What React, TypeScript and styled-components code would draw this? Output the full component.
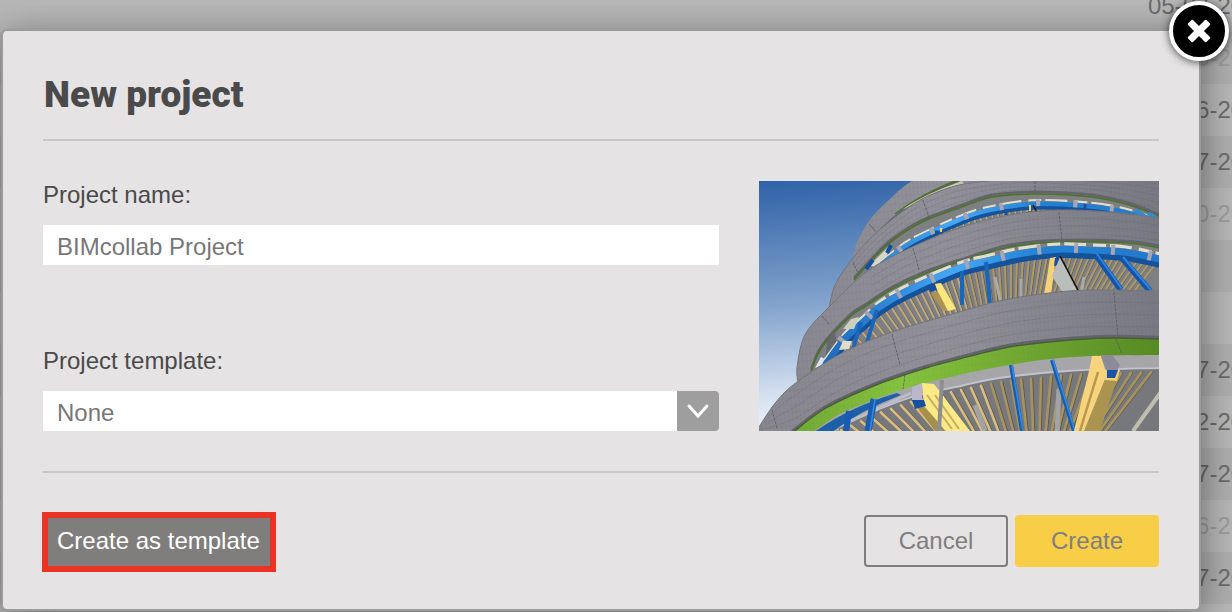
import React from "react";
import styled, { createGlobalStyle, css } from "styled-components";

const GlobalStyle = createGlobalStyle`
  *, *::before, *::after { box-sizing: border-box; }
  body {
    margin: 0;
    background: #b8b8b8;
    font-family: "Liberation Sans", Arial, sans-serif;
    font-size: 24px;
    line-height: 28px;
    color: #4a4a4a;
  }
  button, input, select { font: inherit; }
`;

/* ---------- page behind the dialog ---------- */

const Page = styled.div`
  position: relative;
  min-height: 100vh;
  overflow: hidden;
  padding: 31px 33px 3px 3px;
`;

const Backdrop = styled.div`
  position: absolute;
  inset: 0;
  overflow: hidden;
`;

const DateTable = styled.table`
  width: 100%;
  margin-top: -20px;
  table-layout: fixed;
  border-collapse: collapse;
`;

const DateRow = styled.tr<{ $muted?: boolean }>`
  height: 52px;
  background: #b8b8b8;
  color: ${(p) => (p.$muted ? "#9c9c9c" : "#6c6c6c")};
  &:nth-child(even) { background: #afafaf; }
`;

const NameCell = styled.td`
  padding: 0;
`;

const DateCell = styled.td`
  width: 84px;
  padding: 0;
  overflow: hidden;
  white-space: nowrap;
`;

/* ---------- dialog ---------- */

const Dialog = styled.section`
  position: relative;
  padding: 40px 40px 37px;
  border-radius: 4px;
  background: #e5e3e4;
  box-shadow: 0 0 0 2px #9b9b9b, 0 8px 40px rgba(0, 0, 0, 0.5);
`;

const CloseButton = styled.button`
  position: absolute;
  top: -30px;
  right: -30px;
  display: grid;
  place-items: center;
  width: 60px;
  height: 60px;
  padding: 0;
  border: 4px solid #fff;
  border-radius: 50%;
  background: #000;
  box-shadow: 0 1px 8px rgba(0, 0, 0, 0.7);
`;

const Header = styled.header`
  padding: 2px 0 22px 1px;
  border-bottom: 2px solid #c9c8c9;
`;

const Title = styled.h1`
  margin: 0;
  font-family: Roboto, sans-serif;
  font-size: 37px;
  font-weight: 900;
  line-height: 44px;
`;

const Body = styled.div`
  display: flex;
  gap: 40px;
  padding: 40px 0;
`;

const Fields = styled.div`
  display: flex;
  flex: 1;
  flex-direction: column;
  justify-content: space-between;
  min-width: 0;
`;

const Field = styled.div`
  display: grid;
  gap: 16px;
`;

const control = css`
  width: 100%;
  height: 40px;
  padding: 4px 14px 0;
  border: 0;
  border-radius: 0;
  outline: 0;
  background: #fff;
  color: #777;
`;

const TextInput = styled.input`
  ${control}
`;

const SelectWrap = styled.div`
  display: grid;
`;

const Select = styled.select`
  ${control}
  grid-area: 1 / 1;
  appearance: none;
  border-radius: 0 4px 4px 0;
`;

const SelectArrow = styled.span`
  grid-area: 1 / 1;
  justify-self: end;
  display: grid;
  place-items: center;
  width: 42px;
  border-radius: 0 4px 4px 0;
  background: #9e9e9e;
  pointer-events: none;
`;

const Picture = styled.svg`
  display: block;
  flex: none;
  width: 400px;
  height: 250px;
`;

const Footer = styled.footer`
  display: flex;
  align-items: flex-start;
  justify-content: space-between;
  padding-top: 39px;
  border-top: 2px solid #c9c8c9;
`;

const Actions = styled.div`
  display: flex;
  gap: 7px;
  padding-top: 3px;
`;

const TemplateButton = styled.button`
  height: 60px;
  margin-left: -1px;
  padding: 0 10px 2px 9px;
  border: 6px solid #ea3323;
  background: #7f7e7c;
  color: #fff;
`;

const ActionButton = styled.button<{ $primary?: boolean }>`
  width: 144px;
  height: 52px;
  padding: 0;
  border: 2px solid ${(p) => (p.$primary ? "#f7ce46" : "#7f7e7f")};
  border-radius: 4px;
  background: ${(p) => (p.$primary ? "#f7ce46" : "transparent")};
  color: #7f7e7f;
`;

/* ---------- project picture ---------- */

type Pt = [number, number];

/* Smooth curve through the points (Catmull-Rom turned into Béziers). */
const curve = (pts: Pt[]) => {
  let d = `M${pts[0][0]} ${pts[0][1]}`;
  for (let i = 0; i < pts.length - 1; i++) {
    const a = pts[Math.max(i - 1, 0)];
    const b = pts[i];
    const c = pts[i + 1];
    const e = pts[Math.min(i + 2, pts.length - 1)];
    d += `C${b[0] + (c[0] - a[0]) / 6} ${b[1] + (c[1] - a[1]) / 6} ${c[0] - (e[0] - b[0]) / 6} ${c[1] - (e[1] - b[1]) / 6} ${c[0]} ${c[1]}`;
  }
  return d;
};

const area = (pts: Pt[]) => `${curve(pts)}L402 252L${pts[0][0]} 252Z`;

const yAt = (pts: Pt[], x: number) => {
  for (let i = 0; i < pts.length - 1; i++) {
    const [x0, y0] = pts[i];
    const [x1, y1] = pts[i + 1];
    if (x >= x0 && x <= x1) return y0 + ((y1 - y0) * (x - x0)) / (x1 - x0);
  }
  return pts[pts.length - 1][1];
};

const ring1Outer: Pt[] = [[93, 82], [97, 64], [104, 50], [113, 36], [133, 16], [155, -1], [200, -20], [402, -20]];
const ring2Outer: Pt[] = [[70, 126], [77, 102], [95, 76], [117, 52], [143, 31], [167, 16], [200, 4], [240, -1], [273, -2], [343, 1], [402, 8]];
const ring2Inner: Pt[] = [[95, 99], [113, 79], [133, 60], [163, 41], [200, 27], [233, 16], [277, 13], [333, 16], [370, 24], [402, 36]];
const ring3Outer: Pt[] = [[39, 202], [38, 187], [43, 161], [52, 145], [72, 124], [90, 106], [113, 87], [153, 66], [200, 47], [250, 34], [300, 29], [350, 31], [402, 37]];
const ring3Inner: Pt[] = [[52, 191], [58, 175], [67, 161], [93, 134], [107, 125], [133, 108], [167, 92], [200, 81], [250, 66], [300, 61], [367, 62], [402, 67]];
const ring4Outer: Pt[] = [[-2, 249], [17, 221], [38, 201], [83, 172], [133, 151], [200, 131], [245, 119], [290, 112], [333, 109], [402, 110]];
const ring4Inner: Pt[] = [[33, 252], [67, 227], [117, 204], [167, 187], [200, 178], [250, 166], [300, 160], [350, 157], [402, 158]];
const greenInner: Pt[] = [[50, 254], [83, 232], [133, 212], [167, 202], [200, 194], [233, 187], [283, 179], [333, 175], [402, 174]];

const strip2: Pt[] = [[118, 86], [133, 74], [153, 60], [200, 38], [227, 29], [273, 22], [327, 24], [365, 30], [402, 42]];
const strip3: Pt[] = [[66, 183], [87, 155], [105, 139], [120, 125], [147, 109], [200, 86], [227, 79], [263, 71], [300, 67], [333, 68], [367, 70], [402, 77]];
const slatTop: Pt[] = [[80, 246], [123, 227], [160, 214], [202, 205], [240, 197], [308, 190], [402, 187]];

const mid = (a: Pt[], b: Pt[], f: number): Pt[] =>
  a.filter(([x]) => x > 90 || a === ring4Outer).map(([x, y]) => [x, y + (yAt(b, Math.max(x, b[0][0])) - y) * f] as Pt);

const Slats = ({ from, to, step, base, centre, lean, len, width, colour }: {
  from: number; to: number; step: number; base: Pt[]; centre: number; lean: number; len: number; width: number; colour: (x: number) => string;
}) => {
  const out: React.ReactNode[] = [];
  for (let x = from; x <= to; x += step) {
    const y = yAt(base, x);
    const dx = (centre - x) * lean * len;
    out.push(
      <g key={x} strokeLinecap="round">
        <path d={`M${x + width * 0.6} ${y}l${dx} ${len}`} stroke="#5d574a" strokeWidth={width * 0.5} />
        <path d={`M${x} ${y}l${dx} ${len}`} stroke={colour(x)} strokeWidth={width} />
      </g>,
    );
  }
  return <>{out}</>;
};

const BlueStrip = ({ pts, size }: { pts: Pt[]; size: number }) => {
  const shift = (n: number): Pt[] => pts.map(([x, y]) => [x, y + n]);
  return (
    <g fill="none">
      <path d={curve(shift(-size * 0.45))} stroke="#e0dfcd" strokeWidth={size * 0.35} strokeDasharray="22 7 13 4" />
      <path d={curve(shift(size * 0.75))} stroke="#15529c" strokeWidth={size * 0.75} />
      <path d={curve(shift(size * 0.15))} stroke="url(#beam)" strokeWidth={size * 0.75} />
      <path d={curve(shift(0))} stroke="#a6a5b3" strokeWidth={size * 1.1} strokeDasharray="4 33" strokeDashoffset="10" />
    </g>
  );
};

const Ring = ({ outer, inner }: { outer: Pt[]; inner: Pt[] }) => (
  <>
    <path d={area(outer)} fill="url(#ring)" />
    <path d={area(outer)} fill="url(#tiles)" />
    <g fill="none" stroke="#62626b" strokeWidth="0.5" opacity="0.55">
      {[0.25, 0.5, 0.75].map((f) => <path key={f} d={curve(mid(outer, inner, f))} strokeDasharray="9 1" />)}
    </g>
    <path d={curve(outer)} fill="none" stroke="#74747d" strokeWidth="1" />
    <path d={area(inner)} fill="#7e7f82" />
    <path d={curve(inner)} fill="none" stroke="#63646b" strokeWidth="2.4" transform="translate(0 -2)" />
    <path d={curve(inner)} fill="none" stroke="#4d722a" strokeWidth="1.6" />
  </>
);

const ProjectPicture = () => (
  <Picture viewBox="0 0 400 250" role="img" aria-label="Project picture">
    <defs>
      <linearGradient id="sky" x2="0.12" y2="1">
        <stop offset="0" stopColor="#2f62a8" />
        <stop offset="0.5" stopColor="#83a4cc" />
        <stop offset="0.85" stopColor="#d5e1f0" />
        <stop offset="1" stopColor="#eef3fa" />
      </linearGradient>
      <linearGradient id="ring" gradientUnits="userSpaceOnUse" x1="40" y1="0" x2="400" y2="0">
        <stop offset="0" stopColor="#8a8991" />
        <stop offset="0.4" stopColor="#93929b" />
        <stop offset="1" stopColor="#797983" />
      </linearGradient>
      <linearGradient id="green">
        <stop offset="0" stopColor="#72a935" />
        <stop offset="0.3" stopColor="#84c43c" />
        <stop offset="0.6" stopColor="#72aa31" />
        <stop offset="1" stopColor="#568b22" />
      </linearGradient>
      <linearGradient id="beam" gradientUnits="userSpaceOnUse" x1="60" y1="0" x2="400" y2="0">
        <stop offset="0" stopColor="#1c66b8" />
        <stop offset="0.4" stopColor="#45a8f5" />
        <stop offset="0.65" stopColor="#2381d3" />
        <stop offset="1" stopColor="#2478cc" />
      </linearGradient>
      <pattern id="tiles" width="4" height="7" patternUnits="userSpaceOnUse" patternTransform="rotate(-6)">
        <path d="M1 0V7M0 2H4" stroke="#5f5f69" strokeWidth="0.5" opacity="0.3" />
      </pattern>
    </defs>
    <rect width="400" height="250" fill="url(#sky)" />

    <path d={area(ring1Outer)} fill="url(#ring)" />
    <path d={area(ring1Outer)} fill="url(#tiles)" />
    <path d="M120 51Q152 18 200 -1" fill="none" stroke="#63646b" strokeWidth="3" />
    <path d="M140 30Q165 13 203 0L206 5Q170 14 147 27Z" fill="#c9c7a8" />
    <path d="M136 33Q163 12 200 -1" fill="none" stroke="#4d722a" strokeWidth="1.5" />
    <path d="M110 43L118 52" stroke="#595961" strokeWidth="0.8" />

    <Ring outer={ring2Outer} inner={ring2Inner} />
    <Slats from={130} to={398} step={6} base={strip2} centre={270} lean={0.005} len={22} width={1.6} colour={() => "#b6ab84"} />
    <BlueStrip pts={strip2} size={6} />
    <path d="M111 84L131 64L127 76L115 86Z" fill="#d7d7c6" />
    <path d="M107 88L114 79M128 72L132 64" stroke="#154fa4" strokeWidth="4" />
    <path d="M176 51h8M247 28v7M272 24v8M326 23v8" stroke="#1b4fa0" strokeWidth="3" />
    <path d="M182 51v-4M271 30v-6" stroke="#f3db5f" strokeWidth="2" />
    <path d="M274 24l5 9" stroke="#151515" strokeWidth="1.5" />
    <path d="M376 29l14 9M389 32l10 6" stroke="#328ada" strokeWidth="4" />

    <Ring outer={ring3Outer} inner={ring3Inner} />
    <path d="M56 187L62 176L66 178L64 184Z" fill="#dbe5f2" />
    <path d="M66 184L68 160L76 150L78 166Z" fill="#66686e" />
    <Slats from={84} to={400} step={6} base={strip3.map(([x, y]) => [x, y + 8])} centre={252} lean={0.0055} len={48} width={1.9} colour={(x) => (x < 200 ? "#c1aa78" : "#ae9a69")} />
    <path d="M236 96l6 26M262 98v22M325 96l-3 18" stroke="#a9aaab" strokeWidth="3" />
    <BlueStrip pts={strip3} size={9} />
    <path d="M80 169L84 160L93 160L90 168Z" fill="#dedecb" />
    <path d="M84 148L92 138L100 136L95 148Z" fill="#cfcfbd" />
    <g fill="none" stroke="#1c66ba" strokeWidth="4">
      <path d="M118 129L108 161M102 141L94 168M203 90V124M227 81L231 122" />
      <path d="M337 74L362 109M363 77L391 110" strokeWidth="6" stroke="#1455ac" />
      <path d="M338 73L363 108M364 76L392 109" strokeWidth="2" stroke="#2f83dd" />
    </g>
    <path d="M172 113L179 110L194 130L184 130Z" fill="#ad9455" />
    <path d="M175 103L182 102L197 128L189 130Z" fill="#fce67d" />
    <path d="M169 105L176 103L178 109L171 111Z" fill="#174f9f" />
    <path d="M291 77L297 76L292 114L285 115Z" fill="#f5d276" />
    <path d="M296 77L301 76L301 84L295 85Z" fill="#1b4f9e" />
    <path d="M301 76L318 110L304 112L293 95Z" fill="#b9beba" />
    <path d="M301 75L320 111" stroke="#111" strokeWidth="1.6" />

    <Ring outer={ring4Outer} inner={ring4Inner} />
    <path d={area(ring4Inner)} fill="url(#green)" />
    <path d={area(ring4Inner)} fill="url(#tiles)" opacity="0.5" />
    <path d={curve(ring4Inner)} fill="none" stroke="#4c5a40" strokeWidth="1.4" />
    <path d={area(greenInner)} fill="#a6a6a8" />
    <path d={area(slatTop)} fill="#77787b" />
    <path d={curve(slatTop)} fill="none" stroke="#c4c4cf" strokeWidth="1.8" />
    <path d="M54 252Q90 226 138 212L142 214Q100 230 72 252Z" fill="#1d5fa8" />
    <Slats from={82} to={396} step={10} base={slatTop.map(([x, y]) => [x, y + 4])} centre={278} lean={0.0068} len={80} width={2.6} colour={(x) => (x < 225 ? "#d8bd7e" : "#a6945f")} />
    <path d="M216 224L226 250M300 208L298 250" stroke="#a2a3a4" strokeWidth="5" />
    <path d="M374 250L402 211" fill="none" stroke="#c0beaf" strokeWidth="4" />
    <path d="M87 242L152 212" stroke="#bdbcca" strokeWidth="3" />
    <g fill="none" stroke="#155cb2">
      <path d="M90 230L87 250" strokeWidth="6" />
      <path d="M115 218L109 250" strokeWidth="7" />
      <path d="M252 184L263 250M293 179L315 250" strokeWidth="4" />
      <path d="M253 184L264 250M294 179L316 250M116 218L111 250" stroke="#348ae2" strokeWidth="1.6" />
    </g>
    <path d="M158 226L167 224L185 250H176Z" fill="#a88f4d" />
    <path d="M163 202L175 203L211 250H187L165 225Z" fill="#fbea86" />
    <path d="M168 214L193 248M176 214L200 248" stroke="#c9ad62" strokeWidth="2" />
    <path d="M153 206L163 202V219L153 220Z" fill="#b9b7c9" />
    <path d="M153 219L165 219L167 225L156 228Z" fill="#164fa0" />
    <path d="M183 199L180 250" stroke="#8d8e91" strokeWidth="4" />
    <path d="M333 175L342 175L348 195L328 250H315L330 190Z" fill="#f8d37e" />
    <path d="M339 191L321 250" stroke="#b8984f" strokeWidth="2.5" />
    <path d="M346 198L358 198L341 250H325Z" fill="#aa9450" />
    <path d="M342 175L353 174L361 184L358 190L347 189Z" fill="#8d8b99" />
    <path d="M346 189H361L358 200L346 199Z" fill="#f1cd73" />
    <path d="M348 189H359L356 197H348Z" fill="#1a53a8" />
    <g stroke="#5a5a63" strokeWidth="0.8" strokeDasharray="3 1" fill="none">
      <path d="M94 81L99 92M164 19L170 37M154 67L160 89M300 31L303 60M63 135L71 144M133 153L141 184M355 111L359 157M13 229L18 247M276 0V10" />
      <path d="M146 194L144 208M357 158L363 173" />
    </g>
  </Picture>
);

const dates: { text: string; muted?: boolean }[] = [
  { text: "05-07-2018" },
  { text: "05-06-2018", muted: true },
  { text: "05-06-2018" },
  { text: "05-07-2018" },
  { text: "05-10-2018", muted: true },
  { text: "" },
  { text: "" },
  { text: "05-07-2018" },
  { text: "05-12-2018" },
  { text: "05-07-2018" },
  { text: "05-06-2018", muted: true },
  { text: "05-07-2018" },
  { text: "" },
];

export default function App() {
  return (
    <Page>
      <GlobalStyle />
      <Backdrop aria-hidden="true">
        <DateTable>
          <tbody>
            {dates.map((d, i) => (
              <DateRow key={i} $muted={d.muted}>
                <NameCell />
                <DateCell>{d.text}</DateCell>
              </DateRow>
            ))}
          </tbody>
        </DateTable>
      </Backdrop>

      <Dialog role="dialog" aria-labelledby="dialog-title">
        <Header>
          <Title id="dialog-title">New project</Title>
        </Header>
        <Body>
          <Fields>
            <Field>
              <label htmlFor="project-name">Project name:</label>
              <TextInput id="project-name" type="text" defaultValue="BIMcollab Project" />
            </Field>
            <Field>
              <label htmlFor="project-template">Project template:</label>
              <SelectWrap>
                <Select id="project-template" defaultValue="None">
                  <option>None</option>
                </Select>
                <SelectArrow>
                  <svg width="24" height="16" viewBox="0 0 24 16" fill="none" stroke="#fff" strokeWidth="3" strokeLinecap="round">
                    <path d="M3 3L12 13L21 3" />
                  </svg>
                </SelectArrow>
              </SelectWrap>
            </Field>
          </Fields>
          <ProjectPicture />
        </Body>
        <Footer>
          <TemplateButton type="button">Create as template</TemplateButton>
          <Actions>
            <ActionButton type="button">Cancel</ActionButton>
            <ActionButton type="submit" $primary>Create</ActionButton>
          </Actions>
        </Footer>
        <CloseButton type="button" aria-label="Close">
          <svg width="26" height="26" viewBox="-13 -13 26 26" fill="#fff">
            <rect x="-13" y="-3.5" width="26" height="7" rx="1" transform="rotate(45)" />
            <rect x="-13" y="-3.5" width="26" height="7" rx="1" transform="rotate(-45)" />
          </svg>
        </CloseButton>
      </Dialog>
    </Page>
  );
}
